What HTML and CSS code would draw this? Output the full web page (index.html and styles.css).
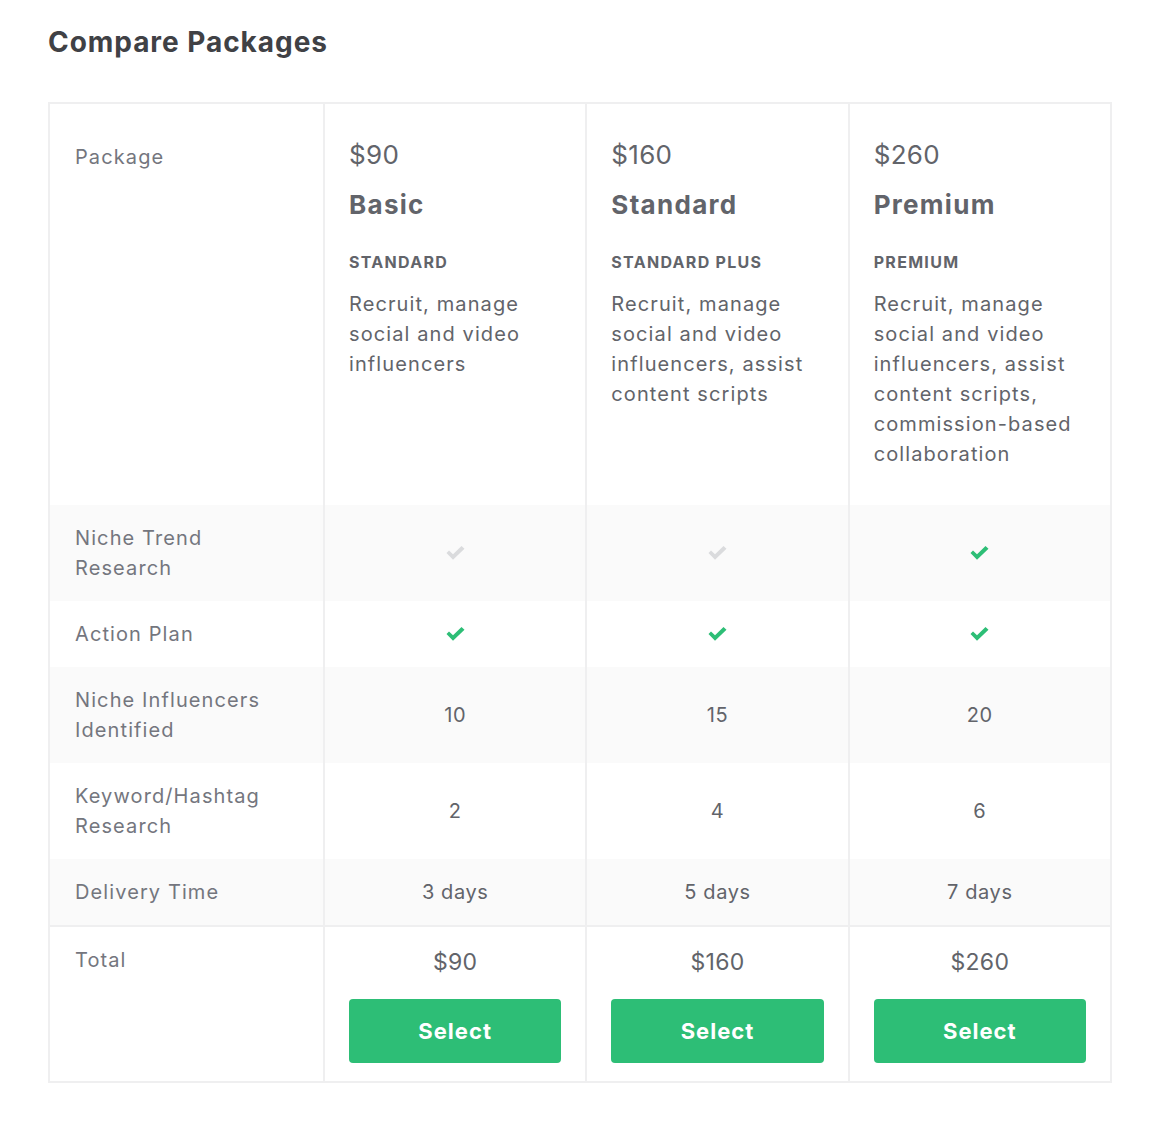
FILE: index.html
```html
<!DOCTYPE html>
<html lang="en">
<head>
<meta charset="utf-8">
<title>Compare Packages</title>
<link rel="stylesheet" href="styles.css">
</head>
<body>
<div class="page">
  <h2 class="title">Compare Packages</h2>
  <div class="table">
    <div class="row head">
      <div class="cell label">Package</div>
      <div class="cell pkg">
        <div class="price">$90</div>
        <div class="name">Basic</div>
        <div class="tier">STANDARD</div>
        <div class="desc">Recruit, manage social and video influencers</div>
      </div>
      <div class="cell pkg">
        <div class="price">$160</div>
        <div class="name">Standard</div>
        <div class="tier">STANDARD PLUS</div>
        <div class="desc">Recruit, manage social and video influencers, assist content scripts</div>
      </div>
      <div class="cell pkg">
        <div class="price">$260</div>
        <div class="name">Premium</div>
        <div class="tier">PREMIUM</div>
        <div class="desc">Recruit, manage social and video influencers, assist content scripts, commission-based collaboration</div>
      </div>
    </div>

    <div class="row shade">
      <div class="cell label">Niche Trend<br>Research</div>
      <div class="cell val"><svg class="check off" viewBox="0 0 19 14"><path d="M0.5 7 L3 4.5 L7 8.2 L15.5 0 L18.5 2.8 L7 13.8 Z"/></svg></div>
      <div class="cell val"><svg class="check off" viewBox="0 0 19 14"><path d="M0.5 7 L3 4.5 L7 8.2 L15.5 0 L18.5 2.8 L7 13.8 Z"/></svg></div>
      <div class="cell val"><svg class="check on" viewBox="0 0 19 14"><path d="M0.5 7 L3 4.5 L7 8.2 L15.5 0 L18.5 2.8 L7 13.8 Z"/></svg></div>
    </div>

    <div class="row">
      <div class="cell label">Action Plan</div>
      <div class="cell val"><svg class="check on" viewBox="0 0 19 14"><path d="M0.5 7 L3 4.5 L7 8.2 L15.5 0 L18.5 2.8 L7 13.8 Z"/></svg></div>
      <div class="cell val"><svg class="check on" viewBox="0 0 19 14"><path d="M0.5 7 L3 4.5 L7 8.2 L15.5 0 L18.5 2.8 L7 13.8 Z"/></svg></div>
      <div class="cell val"><svg class="check on" viewBox="0 0 19 14"><path d="M0.5 7 L3 4.5 L7 8.2 L15.5 0 L18.5 2.8 L7 13.8 Z"/></svg></div>
    </div>

    <div class="row shade">
      <div class="cell label">Niche Influencers<br>Identified</div>
      <div class="cell val">10</div>
      <div class="cell val">15</div>
      <div class="cell val">20</div>
    </div>

    <div class="row">
      <div class="cell label">Keyword/Hashtag<br>Research</div>
      <div class="cell val">2</div>
      <div class="cell val">4</div>
      <div class="cell val">6</div>
    </div>

    <div class="row shade">
      <div class="cell label">Delivery Time</div>
      <div class="cell val">3 days</div>
      <div class="cell val">5 days</div>
      <div class="cell val">7 days</div>
    </div>

    <div class="row total">
      <div class="cell label">Total</div>
      <div class="cell buy">
        <div class="sum">$90</div>
        <button class="select">Select</button>
      </div>
      <div class="cell buy">
        <div class="sum">$160</div>
        <button class="select">Select</button>
      </div>
      <div class="cell buy">
        <div class="sum">$260</div>
        <button class="select">Select</button>
      </div>
    </div>
  </div>
</div>
</body>
</html>
```

FILE: styles.css
```css
* { box-sizing: border-box; }
html, body { margin: 0; padding: 0; background: #fff; }
body {
  font-family: Inter, "Noto Sans", "Liberation Sans", sans-serif;
  color: #62646a;
}
.page {
  width: 1064px;
  margin-left: 48px;
  padding-top: 24px;
}
.title {
  margin: 0 0 42px 0;
  font-size: 28px;
  line-height: 36px;
  font-weight: 700;
  color: #404145;
  letter-spacing: 0.95px;
}
.table {
  border: 2px solid #efeff0;
}
.row {
  display: grid;
  grid-template-columns: 273px repeat(3, 1fr);
}
.row.shade { background: #fafafa; }
.row.total { border-top: 2px solid #efeff0; }
.cell {
  padding: 18px 24px;
  font-size: 20px;
  line-height: 30px;
  letter-spacing: 1.1px;
}
.cell + .cell { border-left: 2px solid #efeff0; }
.cell.label {
  padding-left: 25px;
  color: #74767e;
}
.head .cell.label { padding-top: 38px; }
.pkg { padding-top: 33px; padding-bottom: 36px; }
.price {
  font-size: 26px;
  line-height: 36px;
  color: #62646a;
  letter-spacing: 0.3px;
}
.name {
  margin-top: 14px;
  font-size: 26px;
  line-height: 36px;
  font-weight: 700;
  color: #62646a;
  letter-spacing: 1.3px;
}
.tier {
  margin-top: 27px;
  font-size: 16px;
  line-height: 24px;
  font-weight: 700;
  color: #62646a;
  letter-spacing: 1.3px;
}
.desc {
  margin-top: 15px;
  font-size: 20px;
  line-height: 30px;
  color: #62646a;
}
.val {
  display: flex;
  align-items: center;
  justify-content: center;
  text-align: center;
  color: #62646a;
  letter-spacing: 0.6px;
}
.check { width: 19px; height: 14px; display: block; }
.check.on { fill: #2dbe76; }
.check.off { fill: #dadbdd; }
.buy {
  display: flex;
  flex-direction: column;
  align-items: stretch;
}
.sum {
  text-align: center;
  font-size: 23px;
  line-height: 34px;
  color: #62646a;
  letter-spacing: 0.3px;
}
.select {
  margin-top: 20px;
  height: 64px;
  border: 0;
  border-radius: 4px;
  background: #2dbe76;
  color: #fff;
  font-family: inherit;
  font-size: 22px;
  font-weight: 700;
  letter-spacing: 1px;
  cursor: pointer;
}
```
